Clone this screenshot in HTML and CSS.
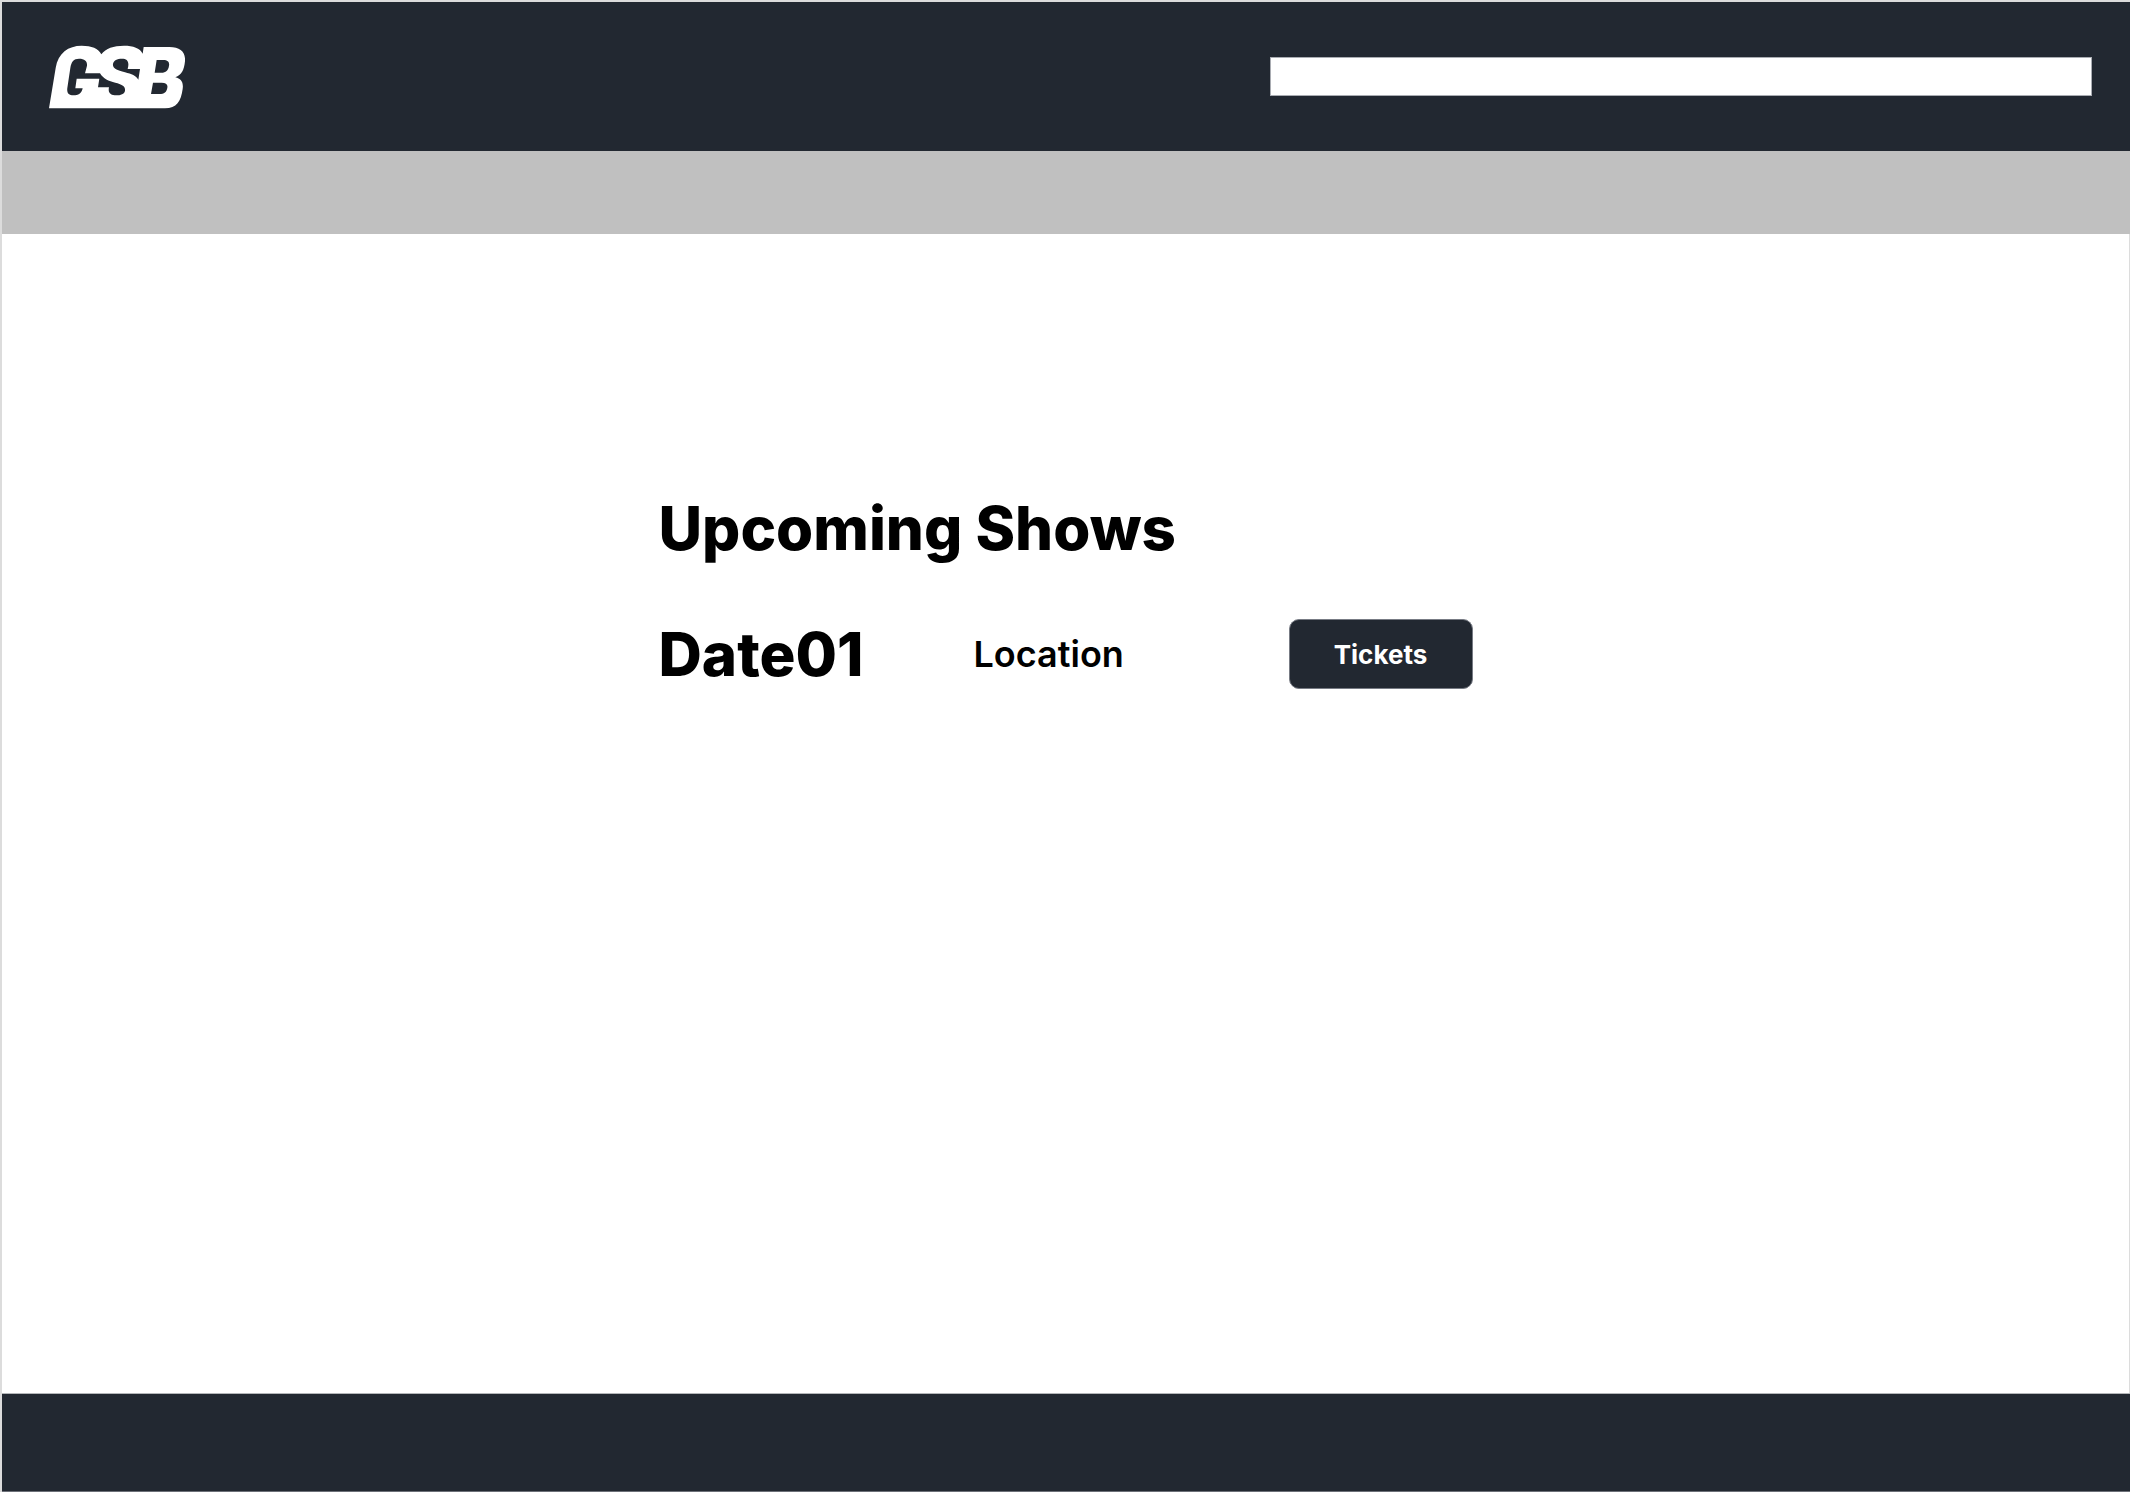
FILE: index.html
```html
<!DOCTYPE html>
<html lang="en">
<head>
<meta charset="utf-8">
<meta name="viewport" content="width=device-width, initial-scale=1">
<title>GSB – Upcoming Shows</title>
<link rel="stylesheet" href="styles.css">
</head>
<body>
<header class="site-header">
  <a class="logo" href="#" aria-label="GSB home">
    <svg viewBox="57 47 408 190" width="136" height="64" aria-hidden="true">
      <path fill="#fff" fill-rule="evenodd" d="M57 236 L77 115 C84 70 115 48 155 48 C185 48 205 56 214 74 C228 56 250 48 282 48 C310 48 330 55 338 72 L341 52 H418 C452 52 467 68 465 95 C462 122 455 136 436 143 C453 147 461 157 458 178 C453 215 440 236 405 236 Z
      M147 87 C165 87 172 95 171 108 L165 131 H210 C220 148 236 154 256 159 C276 164 287 170 285 183 C283 193 272 197 259 197 C243 197 233 190 237 173 H204 L208 147 H140 L136 176 H158 C155 192 145 197 130 197 C116 197 110 189 112 175 L121 115 C124 96 131 87 147 87 Z
      M276 87 C292 87 299 96 293 118 H330 L325 150 C318 138 305 133 285 128 C260 122 247 115 249 103 C251 92 261 87 276 87 Z
      M380 91 H400 C414 91 419 98 417 108 C415 122 408 129 394 129 H374 Z
      M369 159 H395 C408 159 414 165 412 174 C410 187 403 193 388 193 H363 Z"/>
    </svg>
  </a>
  <input class="search" type="search" aria-label="Search">
</header>
<nav class="subnav" aria-label="Sections"></nav>
<main class="content">
  <section class="shows">
    <h1 class="title">Upcoming Shows</h1>
    <div class="show">
      <h2 class="title">Date01</h2>
      <p class="location">Location</p>
      <button class="tickets" type="button">Tickets</button>
    </div>
  </section>
</main>
<footer class="site-footer"></footer>
</body>
</html>
```

FILE: styles.css
```css
* {
  box-sizing: border-box;
}

body {
  display: flex;
  flex-direction: column;
  min-height: 100vh;
  margin: 0;
  border-top: 2px solid #dcdcdc;
  border-left: 2px solid #dcdcdc;
  background: #fff;
  color: #000;
  font-family: Inter, "Liberation Sans", sans-serif;
}

.site-header {
  display: flex;
  align-items: center;
  justify-content: space-between;
  height: 149px;
  padding: 0 38px 0 47px;
  background: #222831;
}

.logo {
  display: flex;
}

.search {
  width: 822px;
  max-width: 60%;
  height: 39px;
  padding: 0 12px;
  border: 1px solid #a9acb2;
  border-radius: 0;
  background: #fff;
  font: inherit;
  font-size: 20px;
}

.subnav {
  height: 83px;
  background: #c0c0c0;
}

.content {
  flex: 1;
  padding: 259px 24px 24px;
  border-right: 1px solid #dcdcdc;
}

.shows {
  display: grid;
  gap: 56px;
  max-width: 814px;
  margin: 0 auto;
}

.title {
  margin: 0;
  font-size: 60px;
  font-weight: 800;
  line-height: 70px;
}

.show {
  display: grid;
  grid-template-columns: 1fr 1fr 184px;
  align-items: center;
}

.location {
  margin: 0;
  font-size: 36px;
  font-weight: 600;
  line-height: 40px;
}

.tickets {
  height: 70px;
  border: 1px solid #777b84;
  border-radius: 10px;
  background: #222831;
  color: #fff;
  font: inherit;
  font-size: 26px;
  font-weight: 700;
}

.site-footer {
  height: 99px;
  border-top: 1px solid #b4b6b9;
  border-bottom: 1px solid #6c7078;
  background: #222831;
}
```
